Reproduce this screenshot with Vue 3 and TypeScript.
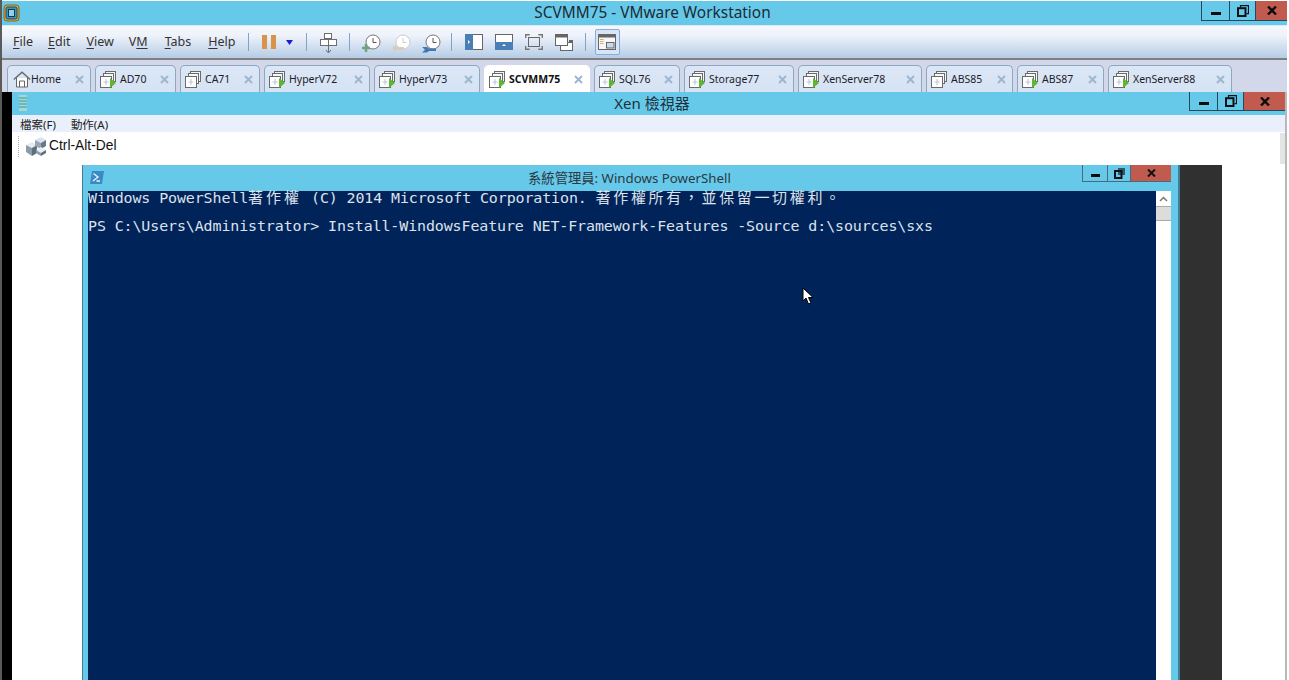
<script setup lang="ts">
interface Tab { name: string; width: number; running: boolean; home?: boolean; active?: boolean }
const tabs: Tab[] = [
  { name: 'Home', width: 84, running: false, home: true },
  { name: 'AD70', width: 81, running: true },
  { name: 'CA71', width: 80, running: false },
  { name: 'HyperV72', width: 106, running: true },
  { name: 'HyperV73', width: 106, running: true },
  { name: 'SCVMM75', width: 106, running: true, active: true },
  { name: 'SQL76', width: 86, running: true },
  { name: 'Storage77', width: 110, running: true },
  { name: 'XenServer78', width: 124, running: true },
  { name: 'ABS85', width: 87, running: false },
  { name: 'ABS87', width: 87, running: true },
  { name: 'XenServer88', width: 124, running: true },
]
const menus = [
  { key: 'F', rest: 'ile', pre: '' },
  { key: 'E', rest: 'dit', pre: '' },
  { key: 'V', rest: 'iew', pre: '' },
  { key: 'M', rest: '', pre: 'V' },
  { key: 'T', rest: 'abs', pre: '' },
  { key: 'H', rest: 'elp', pre: '' },
]
</script>

<template>
  <div class="screen">
    <header class="titlebar">
      <svg class="app-icon" width="17" height="18" viewBox="0 0 17 18">
        <rect x="1" y="1" width="15" height="16" rx="3" fill="#f0a818" stroke="#7a6a30" />
        <rect x="3" y="3" width="11" height="12" rx="1.5" fill="#3b93c0" stroke="#1d4f6e" />
        <rect x="5.500" y="5.500" width="6" height="7" fill="#8fd0ea" stroke="#16394f" />
      </svg>
      <span class="title-text">SCVMM75 - VMware Workstation</span>
      <div class="winbtns top">
        <button class="wb min"><i class="dash"></i></button>
        <button class="wb res">
          <svg width="12" height="12" viewBox="0 0 12 12"><path d="M3.500 2.500V.7h8v8H9.500" fill="none" stroke="#111" stroke-width="1.200"/><rect x="1" y="3.200" width="7.500" height="7.800" fill="none" stroke="#111" stroke-width="2"/></svg>
        </button>
        <button class="wb close"><svg width="10" height="9" viewBox="0 0 10 9"><path d="M1 .5l8 8M9 .5l-8 8" stroke="#0c0c0c" stroke-width="2.400" /></svg></button>
      </div>
    </header>

    <nav class="toolbar">
      <span v-for="m in menus" :key="m.key" class="menu-item">{{ m.pre }}<u>{{ m.key }}</u>{{ m.rest }}</span>
      <i class="sep s1"></i>
      <span class="pause"><i></i><i></i></span>
      <svg class="caret" width="7" height="5" viewBox="0 0 7 5"><path d="M0 0h7L3.500 5z" fill="#1a20c8" /></svg>
      <i class="sep s2"></i>
      <svg class="snap-tree" width="17" height="22" viewBox="0 0 17 22" fill="#fff" stroke="#6e6e6e">
        <rect x="4.500" y=".5" width="7" height="5" /><rect x=".5" y="6.500" width="8" height="6" /><rect x="8.500" y="6.500" width="8" height="6" />
        <path d="M8.500 13v6M6 17l2.500 3 2.500-3" fill="none" />
      </svg>
      <i class="sep s3"></i>
      <svg class="clock c1" width="20" height="20" viewBox="0 0 20 20">
        <circle cx="12" cy="8" r="7" fill="#fff" stroke="#777" /><path d="M12 4v4.500h3.500" fill="none" stroke="#555" />
        <path d="M5 10v8M1 14h8" stroke="#6fa37f" stroke-width="2.500" />
      </svg>
      <svg class="clock c2" width="20" height="20" viewBox="0 0 20 20">
        <circle cx="12" cy="8" r="7" fill="#fff" stroke="#ccc" /><path d="M12 4v4.500h3.500" fill="none" stroke="#ccc" />
        <path d="M1 14l4-3.500V13h8v3H5v2.500z" fill="#d8cdbd" />
      </svg>
      <svg class="clock c3" width="20" height="20" viewBox="0 0 20 20">
        <circle cx="12" cy="8" r="7" fill="#fff" stroke="#777" /><path d="M12 4v4.500h3.500" fill="none" stroke="#555" />
        <path d="M1 13h5l2 1.500h7v2.500H8l-2 1.500H1l3-2.800z" fill="#3f79b4" />
      </svg>
      <i class="sep s4"></i>
      <svg class="view v1" width="18" height="16" viewBox="0 0 18 16"><rect x=".5" y=".5" width="17" height="15" fill="#fff" stroke="#666" /><rect width="8" height="16" fill="#4a7fb6" /><path d="M3 6v4l2-2z" fill="#fff" /></svg>
      <svg class="view v2" width="18" height="16" viewBox="0 0 18 16"><rect x=".5" y=".5" width="17" height="15" fill="#fff" stroke="#666" /><rect y="8" width="18" height="8" fill="#4a7fb6" /><path d="M7 12h4l-2-2z" fill="#fff" /></svg>
      <svg class="view v3" width="18" height="16" viewBox="0 0 18 16" fill="none" stroke="#777"><rect x="3.500" y="3.500" width="11" height="9" stroke="#666" /><path d="M.7 4V.7h4M13.300.7h4V4M.7 12v3.300h4M13.300 15.300h4V12" stroke-width="1.400" /></svg>
      <svg class="view v4" width="18" height="17" viewBox="0 0 18 17"><rect x="14" y="6" width="4" height="4" fill="#666" /><rect x="5.500" y="8.500" width="12" height="8" fill="#fff" stroke="#666" /><rect x=".5" y=".5" width="12" height="11" fill="#fff" stroke="#666" /><rect width="13" height="3.500" fill="#666" /></svg>
      <i class="sep s5"></i>
      <span class="active-tool">
        <svg width="18" height="16" viewBox="0 0 18 16"><rect x=".5" y=".5" width="17" height="15" fill="#f4f6fa" stroke="#666" /><rect width="18" height="3.500" fill="#666" /><path d="M2 5.500h3.500M2 7.500h3.500M2 9.500h3.500" stroke="#d6b35c" /><rect x="8.500" y="8.500" width="7.500" height="5.500" fill="#cdd8e6" stroke="#666" /></svg>
      </span>
    </nav>

    <div class="tabbar">
      <div
        v-for="t in tabs"
        :key="t.name"
        class="tab"
        :class="{ active: t.active }"
        :style="{ width: t.width + 'px' }"
      >
        <svg v-if="t.home" class="tab-icon home" width="18" height="17" viewBox="0 0 18 17" fill="none" stroke="#666">
          <path d="M.8 8.500L9 1.200l8.200 7.300" stroke-width="1.300" /><path d="M3.500 7v9h11V7" fill="#fff" /><path d="M6.500 16v-6h5v6" />
        </svg>
        <svg v-else class="tab-icon" width="17" height="17" viewBox="0 0 17 17" fill="none" stroke="#6a6a6a">
          <rect x="5.500" y=".5" width="10" height="10" fill="#f2f5fa" /><rect x="3.500" y="2.500" width="10" height="10" fill="#f6f8fb" /><rect x=".5" y="5.500" width="11" height="11" fill="#fff" />
          <path d="M6 8v6M3.500 11h5" stroke="#b8c4d2" />
          <path v-if="t.running" d="M10 7l6 5-6 5z" fill="#5cb82e" stroke="none" />
        </svg>
        <span class="tab-name">{{ t.name }}</span>
        <svg class="tab-x" width="9" height="9" viewBox="0 0 9 9"><path d="M1 1l7 7M8 1L1 8" stroke="#9db6d2" stroke-width="2" /></svg>
      </div>
    </div>

    <main class="guest">
      <div class="xen">
        <div class="xen-title">
          <svg class="xen-icon" width="8" height="16" viewBox="0 0 8 16"><rect width="8" height="16" fill="#9fd8d4" /><path d="M0 3h8M0 6h8M0 9h8M0 12h8" stroke="#3c9a9c" /></svg>
          <span class="xen-title-text">Xen 檢視器</span>
          <div class="winbtns xenbtns">
            <button class="wb min"><i class="dash"></i></button>
            <button class="wb res">
              <svg width="12" height="12" viewBox="0 0 12 12"><path d="M3.500 2.500V.7h8v8H9.500" fill="none" stroke="#111" stroke-width="1.200"/><rect x="1" y="3.200" width="7.500" height="7.800" fill="none" stroke="#111" stroke-width="2"/></svg>
            </button>
            <button class="wb close"><svg width="10" height="9" viewBox="0 0 10 9"><path d="M1 .5l8 8M9 .5l-8 8" stroke="#0c0c0c" stroke-width="2.400" /></svg></button>
          </div>
        </div>
        <div class="xen-menu"><span>檔案(F)</span><span>動作(A)</span></div>
        <div class="xen-tools">
          <i class="grip"></i>
          <svg class="cad-icon" width="22" height="21" viewBox="0 0 22 21">
            <path d="M1 9l6-3 5 3-5 3z" fill="#e4ecf2" /><path d="M1 9v7l6 4v-8z" fill="#8b9ba8" /><path d="M7 12v8l5-3V9z" fill="#5d6e7c" />
            <path d="M10 4l6-3 5 3-5 3z" fill="#dbe4ec" /><path d="M10 4v6l6 3V7z" fill="#96a6b3" /><path d="M16 7v6l5-3V4z" fill="#66788a" />
            <path d="M11 14l5-3 5 3-5 3z" fill="#e8eff4" /><path d="M11 14v3l5 3v-3z" fill="#8b9ba8" /><path d="M16 17v3l5-3v-3z" fill="#5d6e7c" />
          </svg>
          <span class="cad">Ctrl-Alt-Del</span>
          <i class="scroll-stub"></i>
        </div>
        <div class="remote">
          <section class="ps">
            <div class="ps-title">
              <svg class="ps-icon" width="14" height="13" viewBox="0 0 14 13"><path d="M2 0h12l-2 13H0z" fill="#3a8ac6" /><path d="M3.500 2.500L8 6l-5 4M6.500 10H10" fill="none" stroke="#eef6fb" stroke-width="1.300" /></svg>
              <span class="ps-title-text">系統管理員: Windows PowerShell</span>
              <div class="winbtns psbtns">
                <button class="wb min"><i class="dash"></i></button>
                <button class="wb res">
                  <svg width="11" height="11" viewBox="0 0 11 11"><rect x="4" y="0" width="7" height="7" fill="#2b5a72" /><rect x="1" y="3" width="6.500" height="7" fill="none" stroke="#111" stroke-width="2" /></svg>
                </button>
                <button class="wb close"><svg width="9" height="8" viewBox="0 0 9 8"><path d="M1 .5l7 7M8 .5l-7 7" stroke="#111" stroke-width="2" /></svg></button>
              </div>
            </div>
            <div class="ps-body">
              <div class="console">
                <p class="l1">Windows PowerShell<span class="cjk">著作權</span> (C) 2014 Microsoft Corporation. <span class="cjk rights">著作權所有，並保留一切權利。</span></p>
                <p class="l2">PS C:\Users\Administrator&gt; Install-WindowsFeature NET-Framework-Features -Source d:\sources\sxs</p>
                <svg class="pointer" width="12" height="18" viewBox="0 0 12 18"><path d="M1 1v13l3-3 2.500 6 2.500-1-2.500-5.500H11z" fill="#fff" stroke="#000" /></svg>
              </div>
              <div class="scroll">
                <span class="up"><svg width="9" height="6" viewBox="0 0 9 6"><path d="M1 5l3.500-3.500L8 5" fill="none" stroke="#777" stroke-width="1.500" /></svg></span>
                <span class="thumb"></span>
              </div>
            </div>
          </section>
          <div class="dark"></div>
        </div>
      </div>
    </main>
  </div>
</template>

<style>
html, body { margin: 0; background: #fff; overflow: hidden; }
</style>

<style scoped>
.screen {
  width: 1289px; height: 680px; overflow: hidden; background: #fff;
  display: flex; flex-direction: column; box-sizing: border-box;
  padding: 1px 2px 0 2px; position: relative;
  font-family: "Noto Sans", "Noto Sans CJK TC", sans-serif; color: #111;
  box-shadow: inset 2px 0 0 #5a5a5a;
}
.titlebar {
  height: 24px; flex: none; background: #66c9ea; display: flex; align-items: center;
  position: relative; justify-content: center;
}
.app-icon { position: absolute; left: 1px; top: 3px; }
.title-text { font-size: 15.400px; color: #1c2b33; margin: 0 0 1px 16px; }

.winbtns { position: absolute; top: 0; right: 0; display: flex; }
.wb {
  border: 0; padding: 0; margin: 0; background: #66c9ea; display: flex; align-items: center;
  justify-content: center; border-left: 1px solid #27485a; border-bottom: 1px solid #27485a;
  box-sizing: border-box;
}
.wb.close { background: #c15b50; border-left-color: #27485a; }
.dash { display: block; width: 10px; height: 3px; background: #0c0c0c; margin-top: 5px; }
.winbtns.top { height: 20px; }
.top .wb.min { width: 28px; } .top .wb.res { width: 26px; } .top .wb.close { width: 32px; }
.xenbtns { height: 19px; }
.xenbtns .wb.min { width: 28px; } .xenbtns .wb.res { width: 26px; } .xenbtns .wb.close { width: 42px; }
.psbtns { height: 17px; right: 7px; }
.psbtns .wb { border-color: #4a6a78; }
.psbtns .wb.min { width: 25px; } .psbtns .wb.res { width: 23px; } .psbtns .wb.close { width: 41px; }
.psbtns .dash { height: 2.500px; width: 9px; }

.toolbar {
  flex: none; display: flex; align-items: center; padding-left: 11px;
  background: linear-gradient(#f5f8fd, #eef2fa 30%, #b9cfe8 95%);
  border-bottom: 2px solid #7f7f7f; border-top: 1px solid #dfe7f2;
  height: 32px;
}
.menu-item { font-size: 12.500px; color: #333; margin: 0 15px 2px 0; }
.menu-item:nth-child(2) { margin-right: 16px; }
.menu-item:nth-child(3) { margin-right: 15px; }
.menu-item:nth-child(4) { margin-right: 17px; }
.menu-item:nth-child(5) { margin-right: 17px; }
.menu-item u { text-underline-offset: 2px; }
.sep { width: 1px; height: 18px; background: #7ea3cc; flex: none; }
.s1 { margin-left: -3px; }
.pause { display: flex; gap: 4px; margin-left: 13px; }
.pause i { display: block; width: 5px; height: 14px; background: #d8934a; }
.caret { margin-left: 10px; }
.s2 { margin-left: 13px; }
.snap-tree { margin-left: 13px; margin-top: 3px; }
.s3 { margin-left: 12px; }
.c1 { margin-left: 11px; margin-top: 3px; }
.c2 { margin-left: 10px; margin-top: 3px; }
.c3 { margin-left: 10px; margin-top: 3px; }
.s4 { margin-left: 10px; }
.v1 { margin-left: 13px; } .v2, .v3, .v4 { margin-left: 12px; }
.s5 { margin-left: 12px; }
.active-tool {
  margin-left: 9px; width: 25px; height: 26px; box-sizing: border-box; display: flex;
  align-items: center; justify-content: center;
  border: 1px solid #88acd8; border-radius: 2px; background: #d7e5f6;
}

.tabbar {
  height: 32px; flex: none; background: #d2d8ea; display: flex; align-items: flex-end;
  gap: 4px; padding-left: 5px;
}
.tab {
  height: 27px; box-sizing: border-box; flex: none; display: flex; align-items: center;
  border: 1px solid #8da8bf; border-bottom: 0; border-radius: 5px 5px 0 0;
  background: linear-gradient(#dbe7f6, #d6e3f4); padding: 0 6px 0 4px; overflow: hidden;
}
.tab.active { background: #fff; border-color: #fff; }
.tab.active .tab-name { font-weight: 700; color: #111; }
.tab-icon { flex: none; margin-right: 3px; }
.tab-icon.home { margin: 0 0 0 1px; }
.tab-name { font-size: 10.500px; color: #1c1c2c; flex: 1; white-space: nowrap; }
.tab-x { flex: none; }

.guest { flex: 1; min-height: 0; background: #000; display: flex; padding-left: 10px; }
.xen { flex: 1; min-width: 0; display: flex; flex-direction: column; background: #fff; margin-right: 2px; box-shadow: 2px 0 0 #b8b8b8; }
.xen-title {
  height: 23px; flex: none; background: #66c9ea; position: relative; display: flex;
  align-items: center; justify-content: center;
}
.xen-icon { position: absolute; left: 7px; top: 3px; }
.xen-title-text { font-size: 15px; color: #20303a; margin: 0 0 2px 7px; }
.xen-menu {
  height: 17px; flex: none; background: #e9f0fb; display: flex; align-items: center;
  gap: 15px; padding-left: 8px; font-size: 11.500px; color: #222;
}
.xen-tools {
  height: 33px; flex: none; background: #fff; display: flex; align-items: center;
  padding-left: 6px; position: relative;
}
.grip { width: 1px; height: 21px; border-left: 1px dotted #aaa; margin-right: 5px; margin-bottom: 4px; }
.cad-icon { margin-bottom: 5px; }
.cad { color: #111; margin: -6px 0 0 2px; font-family: "Liberation Sans", sans-serif; font-size: 13.800px; }
.scroll-stub { position: absolute; right: 0; top: 1px; bottom: 1px; width: 5px; background: #e4e4e4; }

.remote { flex: 1; min-height: 0; display: flex; padding-left: 70px; padding-right: 63px; }
.ps { width: 1098px; flex: none; display: flex; flex-direction: column; background: #66c9ea; border-left: 1px solid #3f7f96; border-right: 2px solid #3f7f96; box-sizing: border-box; }
.ps-title { height: 26px; flex: none; position: relative; display: flex; align-items: center; justify-content: center; }
.ps-icon { position: absolute; left: 7px; top: 6px; }
.ps-title-text { font-size: 13.300px; color: #2a3a44; margin: 0 2px 1px 0; }
.ps-body { flex: 1; min-height: 0; display: flex; padding-left: 5px; padding-right: 7px; }
.console { flex: 1; background: #00245a; position: relative; font-family: "DejaVu Sans Mono", "Noto Sans CJK TC", monospace; font-size: 14.950px; letter-spacing: -0.1px; color: #dde1ea; white-space: pre; }
.console p { margin: 0; height: 14px; line-height: 14px; }
.console p.l1 { margin-top: -1px; }
.console p.l2 { margin-top: 15px; }
.cjk { font-family: "Noto Sans CJK TC", sans-serif; font-size: 15px; letter-spacing: 3px; }
.cjk.rights { letter-spacing: 2.650px; }
.pointer { position: absolute; left: 714px; top: 96px; }
.scroll { width: 15px; flex: none; background: #fff; display: flex; flex-direction: column; }
.up { height: 15px; display: flex; align-items: center; justify-content: center; }
.thumb { height: 15px; background: #dcdcdc; border-top: 1px solid #aaa; border-bottom: 1px solid #aaa; box-sizing: border-box; }
.dark { width: 42px; flex: none; background: #303030; }
</style>
